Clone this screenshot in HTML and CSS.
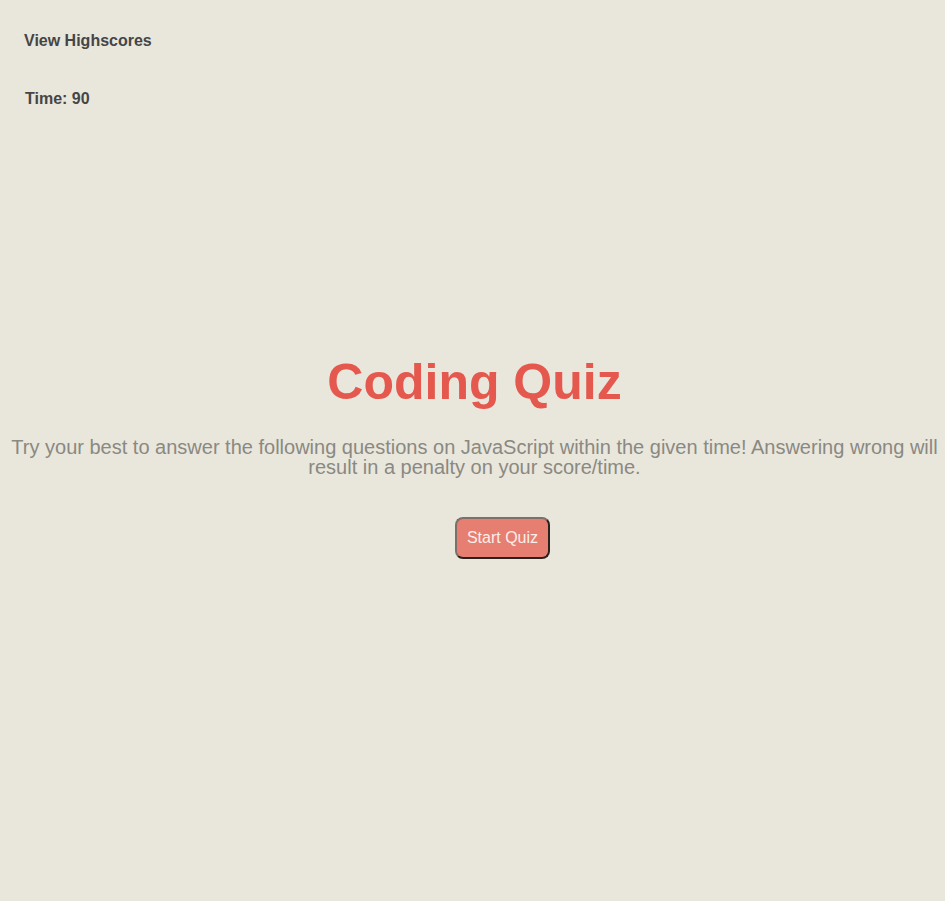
FILE: index.html
```html
<!DOCTYPE html>
<html lang="en">
<head>
<meta charset="utf-8">
<title>Coding Quiz</title>
<link rel="stylesheet" href="styles.css">
</head>
<body>
<header class="top">
  <a class="highscores">View Highscores</a>
  <div class="timer">Time: <span>90</span></div>
</header>
<main class="intro">
  <h1 class="title">Coding Quiz</h1>
  <p class="lead">Try your best to answer the following questions on JavaScript within the given time! Answering wrong will result in a penalty on your score/time.</p>
  <div class="actions">
    <button class="start">Start Quiz</button>
  </div>
</main>
</body>
</html>
```

FILE: styles.css
```css
html, body {
  margin: 0;
  padding: 0;
  background: #e9e6dc;
  font-family: "Liberation Sans", Arial, sans-serif;
}
.top {
  padding: 32px 24px 0;
}
.highscores {
  display: block;
  font-weight: bold;
  font-size: 16px;
  line-height: 18px;
  color: #454545;
}
.timer {
  margin-top: 40px;
  padding-left: 1px;
  font-weight: bold;
  font-size: 16px;
  line-height: 18px;
  color: #454545;
}
.intro {
  margin-top: 245px;
  padding-left: 4px;
  text-align: center;
}
.title {
  margin: 0;
  font-size: 50px;
  line-height: 58px;
  color: #e5584e;
}
.lead {
  margin: 26px 0 0;
  font-size: 20px;
  line-height: 20px;
  color: #8a8982;
}
.actions {
  margin-top: 40px;
  padding-left: 56px;
}
.start {
  font-family: "Liberation Sans", Arial, sans-serif;
  font-size: 16px;
  color: #fbeee8;
  background: #e67e72;
  border: 2px solid;
  border-color: #7d706a #2b2220 #2b2220 #7d706a;
  border-radius: 8px;
  padding: 10px 10px;
}
```
